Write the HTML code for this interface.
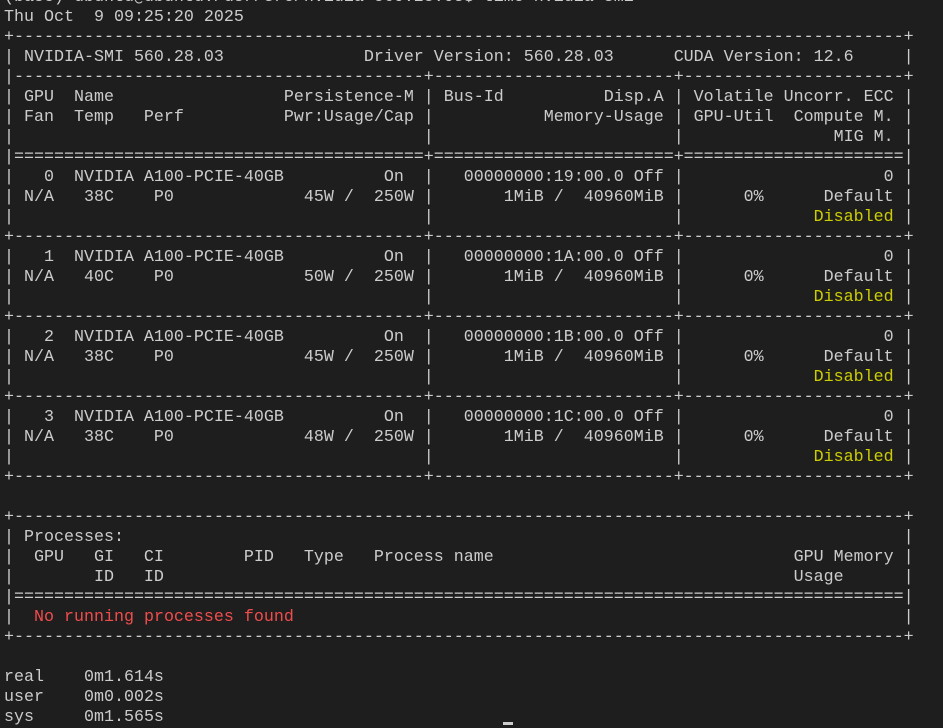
<!DOCTYPE html>
<html><head><meta charset="utf-8"><style>
html,body{margin:0;padding:0;background:#1e1e1e;width:943px;height:727px;overflow:hidden}
pre{position:absolute;left:4px;top:-12px;margin:0;font-family:"Liberation Mono",monospace;font-size:16.667px;line-height:20px;color:#cccccc;white-space:pre}
.y{color:#cdcd00}.r{color:#f14c4c}
#cur{position:absolute;left:503px;top:722px;width:10px;height:3px;background:#cccccc}
</style></head><body>
<pre>(base) ubuntu@ubuntu:/usr/src/nvidia-560.28.03$ time nvidia-smi
Thu Oct  9 09:25:20 2025
+-----------------------------------------------------------------------------------------+
| NVIDIA-SMI 560.28.03              Driver Version: 560.28.03      CUDA Version: 12.6     |
|-----------------------------------------+------------------------+----------------------+
| GPU  Name                 Persistence-M | Bus-Id          Disp.A | Volatile Uncorr. ECC |
| Fan  Temp   Perf          Pwr:Usage/Cap |           Memory-Usage | GPU-Util  Compute M. |
|                                         |                        |               MIG M. |
|=========================================+========================+======================|
|   0  NVIDIA A100-PCIE-40GB          On  |   00000000:19:00.0 Off |                    0 |
| N/A   38C    P0             45W /  250W |       1MiB /  40960MiB |      0%      Default |
|                                         |                        |             <span class="y">Disabled</span> |
+-----------------------------------------+------------------------+----------------------+
|   1  NVIDIA A100-PCIE-40GB          On  |   00000000:1A:00.0 Off |                    0 |
| N/A   40C    P0             50W /  250W |       1MiB /  40960MiB |      0%      Default |
|                                         |                        |             <span class="y">Disabled</span> |
+-----------------------------------------+------------------------+----------------------+
|   2  NVIDIA A100-PCIE-40GB          On  |   00000000:1B:00.0 Off |                    0 |
| N/A   38C    P0             45W /  250W |       1MiB /  40960MiB |      0%      Default |
|                                         |                        |             <span class="y">Disabled</span> |
+-----------------------------------------+------------------------+----------------------+
|   3  NVIDIA A100-PCIE-40GB          On  |   00000000:1C:00.0 Off |                    0 |
| N/A   38C    P0             48W /  250W |       1MiB /  40960MiB |      0%      Default |
|                                         |                        |             <span class="y">Disabled</span> |
+-----------------------------------------+------------------------+----------------------+

+-----------------------------------------------------------------------------------------+
| Processes:                                                                              |
|  GPU   GI   CI        PID   Type   Process name                              GPU Memory |
|        ID   ID                                                               Usage      |
|=========================================================================================|
|  <span class="r">No running processes found</span>                                                             |
+-----------------------------------------------------------------------------------------+

real	0m1.614s
user	0m0.002s
sys	0m1.565s</pre>
<div id="cur"></div>
</body></html>
